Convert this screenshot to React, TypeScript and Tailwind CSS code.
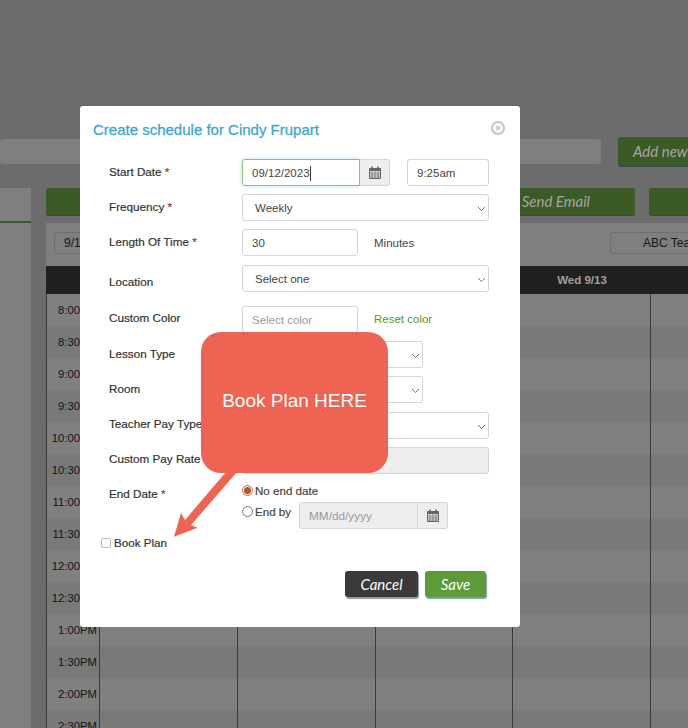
import { ReactNode } from "react";

const rows = [
  "8:00AM", "8:30AM", "9:00AM", "9:30AM", "10:00AM", "10:30AM", "11:00AM", "11:30AM",
  "12:00PM", "12:30PM", "1:00PM", "1:30PM", "2:00PM", "2:30PM",
];

function CalendarIcon() {
  return (
    <svg width="12" height="13" viewBox="0 0 12 13" className="text-[#666]">
      <path d="M.5 2.5h11v10H.5z" fill="none" stroke="currentColor" />
      <path d="M.5 2h11v3H.5z" fill="currentColor" />
      <path d="M3 .5v3M9 .5v3" stroke="currentColor" strokeWidth="1.6" />
      <path d="M.5 7h11M.5 9h11M.5 11h11M3 5v7M6 5v7M9 5v7" stroke="currentColor" strokeWidth=".7" />
    </svg>
  );
}

function Chevron() {
  return (
    <svg width="9" height="6" viewBox="0 0 9 6" className="absolute right-[2px] top-[11px]">
      <path d="M1 1l3.500 3.500L8 1" fill="none" stroke="#777" strokeWidth="1" />
    </svg>
  );
}

function Select({ value, className }: { value?: string; className: string }) {
  return (
    <div className={`relative flex h-[27px] items-center rounded-[3px] border border-[#d5d5d5] bg-white pt-[2px] pl-[12px] ${className}`}>
      {value}
      <Chevron />
    </div>
  );
}

function Row({ label, required, className, labelClass, children }: { label: string; required?: boolean; className?: string; labelClass?: string; children?: ReactNode }) {
  return (
    <div className={`flex h-[27px] ${className ?? "mb-2"}`}>
      <div className={`w-[133px] text-[11.7px] font-medium text-[#333] [-webkit-text-stroke:0.2px_#333] ${labelClass ?? "pt-[4px]"}`}>
        {label}
        {required && <span className="text-[#e03a2e]"> *</span>}
      </div>
      {children}
    </div>
  );
}

function Schedule() {
  return (
    <div className="flex h-[728px] w-[688px] flex-col overflow-hidden bg-[#6c6c6c] font-['Liberation_Sans',sans-serif]">
      <div className="flex h-[188px] shrink-0 items-start gap-[17px] pt-[137px]">
        <div className="mt-[2px] h-[25px] w-[601px] shrink-0 rounded-[3px] bg-[#7f7f7f]" />
        <div className="flex h-[29px] w-[90px] shrink-0 items-center rounded-[3px] bg-[#3b5a25] pl-[15px] font-['Lato',sans-serif] text-[15px] text-[#a5a5a5] italic shadow-[0_1px_0_#2c4a52]">
          Add new
        </div>
      </div>
      <div className="flex flex-1 gap-[15px]">
        <div className="h-full w-[31px] shrink-0 bg-[#7f7f7f]">
          <div className="h-[35px] border-b-2 border-[#3b5a25]" />
        </div>
        <div className="flex w-[660px] shrink-0 flex-col">
          <div className="flex h-[35px] shrink-0 gap-[14px]">
            <div className="flex h-[27px] w-[589px] shrink-0 items-center justify-end rounded-[3px] bg-[#3b5a25] pr-[45px] font-['Lato',sans-serif] text-[15px] text-[#a5a5a5] italic shadow-[0_1px_0_#2c4a52]">
              Send Email
            </div>
            <div className="h-[27px] w-[60px] shrink-0 rounded-[3px] bg-[#3b5a25] shadow-[0_1px_0_#2c4a52]" />
          </div>
          <div className="flex h-[43px] shrink-0 items-center justify-between bg-[#7f7f7f] pb-[3px] pl-2 text-[12px] text-[#191919]">
            <div className="flex h-[22px] w-[60px] items-center rounded-[3px] border border-[#6e6e6e] pl-[9px]">9/12</div>
            <div className="flex h-[22px] w-[96px] items-center whitespace-nowrap rounded-l-[3px] border border-[#6e6e6e] pl-[32px]">ABC Teacher</div>
          </div>
          <div className="grid h-[28px] shrink-0 grid-cols-[54px_138px_138px_137px_138px_55px] bg-[#202020] text-[11.5px] font-bold text-[#a0a0a0]">
            <div />
            <div />
            <div />
            <div />
            <div className="flex items-center justify-center pt-[2px]">Wed 9/13</div>
            <div />
          </div>
          {rows.map((time, i) => (
            <div
              key={time}
              className={`grid h-[32px] shrink-0 grid-cols-[54px_138px_138px_137px_138px_55px] text-[11.3px] text-[#141414] ${i % 2 === 0 ? "bg-[#808080]" : "bg-[#797979]"}`}
            >
              <div className="flex items-center justify-end border-x border-[#3a3a3a] pr-[2px]">{time}</div>
              <div className="border-r border-[#3a3a3a]" />
              <div className="border-r border-[#3a3a3a]" />
              <div className="border-r border-[#3a3a3a]" />
              <div className="border-r border-[#3a3a3a]" />
              <div />
            </div>
          ))}
        </div>
      </div>
    </div>
  );
}

function Modal() {
  return (
    <div className="absolute top-[106px] left-[80px] h-[521px] w-[440px] rounded-[3px] bg-white font-['Liberation_Sans',sans-serif] text-[11.5px] text-[#444]">
      <div className="flex h-[53px] items-center justify-between pr-[15px] pb-[4px] pl-[13px]">
        <h2 className="text-[15px] font-medium text-[#3fa7cf] [-webkit-text-stroke:0.3px_#3fa7cf]">Create schedule for Cindy Frupart</h2>
        <span className="mb-[5px] flex h-[14px] w-[14px] items-center justify-center rounded-full border-2 border-[#c4c4c4] text-[#c4c4c4]">
          <svg width="6" height="6" viewBox="0 0 6 6"><path d="M1 1l4 4M5 1L1 5" stroke="currentColor" strokeWidth="1.6" /></svg>
        </span>
      </div>
      <div className="pr-[30px] pl-[29px]">
        <Row label="Start Date" required>
          <div className="flex h-[27px] w-[118px] items-center rounded-l-[3px] border border-[#8fbf78] pt-[2px] pl-[9px] shadow-[0_0_4px_#bcdcf0]">
            09/12/2023<span className="h-[15px] w-px bg-[#333]" />
          </div>
          <div className="flex h-[27px] w-[30px] items-center justify-center rounded-r-[3px] border border-l-0 border-[#d5d5d5] bg-[#eeeeee]"><CalendarIcon /></div>
          <div className="ml-[17px] flex h-[27px] w-[82px] items-center rounded-[3px] border border-[#d5d5d5] pt-[2px] pl-[9px]">9:25am</div>
        </Row>
        <Row label="Frequency" required><Select value="Weekly" className="w-[247px]" /></Row>
        <Row label="Length Of Time" required className="mb-[9px]">
          <div className="flex h-[27px] w-[116px] items-center rounded-[3px] border border-[#d5d5d5] pt-[2px] pl-[9px]">30</div>
          <span className="ml-[16px] self-center pt-[2px]">Minutes</span>
        </Row>
        <Row label="Location" className="mb-[14px]" labelClass="pt-[8px]"><Select value="Select one" className="w-[247px]" /></Row>
        <Row label="Custom Color" labelClass="pt-[3px]">
          <div className="flex h-[27px] w-[116px] items-center rounded-[3px] border border-[#d5d5d5] pt-[2px] pl-[9px] text-[#999]">Select color</div>
          <span className="ml-[16px] self-center text-[#4f9a2d]">Reset color</span>
        </Row>
        <Row label="Lesson Type"><Select className="w-[181px]" /></Row>
        <Row label="Room" className="mb-[9px]"><Select className="w-[181px]" /></Row>
        <Row label="Teacher Pay Type" labelClass="pt-[3px]"><Select className="w-[247px]" /></Row>
        <Row label="Custom Pay Rate" className="mb-[7px]" labelClass="pt-[3px]">
          <div className="h-[27px] w-[247px] rounded-[3px] border border-[#d5d5d5] bg-[#eeeeee]" />
        </Row>
        <div className="flex">
          <div className="w-[133px] pt-[4px] text-[11.7px] font-medium text-[#333] [-webkit-text-stroke:0.2px_#333]">
            End Date<span className="text-[#e03a2e]"> *</span>
          </div>
          <div className="flex flex-col">
            <label className="flex h-[21px] items-center gap-[2px] pb-[2px] text-[11.6px] [-webkit-text-stroke:0.2px_#444]">
              <span className="flex h-[11px] w-[11px] items-center justify-center rounded-full border border-[#c4694a]"><span className="h-[7px] w-[7px] rounded-full bg-[#b0532f]" /></span>
              No end date
            </label>
            <div className="flex items-start">
              <label className="flex h-[19px] w-[57px] items-center gap-[2px] text-[11.6px] [-webkit-text-stroke:0.2px_#444]">
                <span className="h-[11px] w-[11px] rounded-full border border-[#777]" />
                End by
              </label>
              <div className="flex h-[27px] w-[119px] items-center rounded-l-[3px] border border-[#d5d5d5] bg-[#eeeeee] pt-[2px] pl-[9px] text-[11.8px] text-[#999]">MM/dd/yyyy</div>
              <div className="flex h-[27px] w-[30px] items-center justify-center rounded-r-[3px] border border-l-0 border-[#d5d5d5] bg-[#eeeeee]"><CalendarIcon /></div>
            </div>
          </div>
        </div>
        <label className="-ml-[8px] mt-[7px] flex h-[14px] items-center gap-[3px] text-[11.6px] text-[#333] [-webkit-text-stroke:0.2px_#333]">
          <span className="h-[10px] w-[10px] rounded-[2px] border border-[#bbb]" />
          Book Plan
        </label>
        <div className="mt-[21px] flex justify-end gap-[7px] pr-[4px] font-['Lato',sans-serif] text-[15px] text-white italic">
          <button className="h-[26px] w-[73px] rounded-[3px] bg-[#3a3a3a] shadow-[1px_2px_1px_#8f9aa1]">Cancel</button>
          <button className="h-[26px] w-[61px] rounded-[3px] bg-[#5c9a3a] shadow-[1px_2px_1px_#7d9cb0]">Save</button>
        </div>
      </div>
    </div>
  );
}

export default function App() {
  return (
    <div className="relative h-[728px] w-[688px] overflow-hidden">
      <Schedule />
      <Modal />
      {/* callout */}
      <svg width="80" height="80" viewBox="165 465 80 80" className="absolute top-[465px] left-[165px]">
        <path d="M226 472h11L191 525l6.700 2.700L174 536.700 181 513l4 7z" fill="#ee6352" />
      </svg>
      <div className="absolute top-[332px] left-[201px] flex h-[141px] w-[187px] items-start justify-center rounded-[20px] bg-[#ee6352] pt-[57px] font-['Liberation_Sans',sans-serif] text-[19px] leading-6 text-white">
        Book Plan HERE
      </div>
    </div>
  );
}
